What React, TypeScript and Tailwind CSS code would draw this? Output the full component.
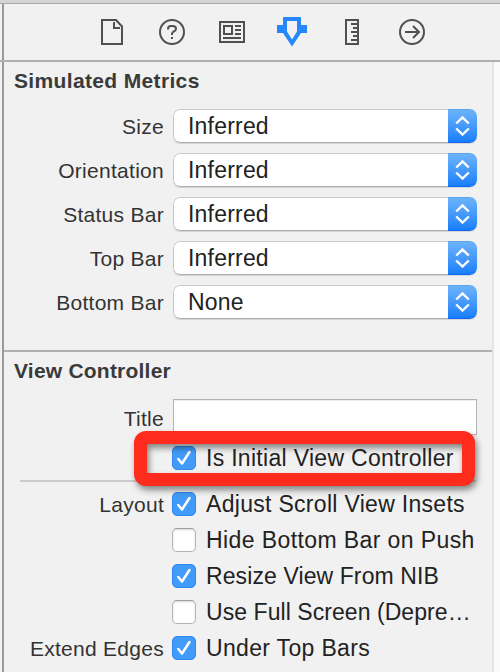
import React from "react";

function FileIcon() {
  return (
    <svg width="22" height="26" viewBox="0 0 22 26" fill="none" stroke="#505050" strokeWidth="2">
      <path d="M1 1H15L21 7.5V25H1Z" />
      <path d="M13 3V9H19" />
    </svg>
  );
}

function HelpIcon() {
  return (
    <svg width="26" height="26" viewBox="0 0 26 26" fill="none" stroke="#505050" strokeWidth="2">
      <circle cx="13" cy="13" r="12" />
      <path d="M9 10.5V9.8Q9 7 12 7H13.5Q17 7 17 9.7Q17 11.5 15 12.3Q13 13.2 13 15V16" />
      <path d="M13 18V20" />
    </svg>
  );
}

function IdentityIcon() {
  return (
    <svg width="26" height="22" viewBox="0 0 26 22" fill="none" stroke="#505050" strokeWidth="2">
      <path d="M1 1H25V21H1Z" />
      <path d="M5 5H13V13H5Z" />
      <path d="M16 5H22M16 9H22M16 13H22M4 17H22" />
    </svg>
  );
}

function AttributesIcon() {
  return (
    <svg width="30" height="30" viewBox="0 0 30 30" fill="#2487fb">
      <path fillRule="evenodd" d="M6 0H24V8H30V16H24L15 29.5L6 16H0V8H6ZM10 4V14.5L15 22.5L20 14.5V4Z" />
    </svg>
  );
}

function SizeIcon() {
  return (
    <svg width="14" height="26" viewBox="0 0 14 26" fill="none" stroke="#505050" strokeWidth="2">
      <path d="M1 1H13V25H1Z" />
      <path d="M6 5H12M8 9H12M6 13H12M8 17H12M6 21H12" />
    </svg>
  );
}

function ConnectionsIcon() {
  return (
    <svg width="26" height="26" viewBox="0 0 26 26" fill="none" stroke="#505050" strokeWidth="2">
      <circle cx="13" cy="13" r="12" />
      <path d="M6 13H20M14 7L20 13L14 19" />
    </svg>
  );
}

function Label({ children }: { children?: React.ReactNode }) {
  return (
    <div className="w-[160px] shrink-0 pt-px text-right text-[21px] leading-6 tracking-[0.28px] whitespace-nowrap text-[#333333]">
      {children}
    </div>
  );
}

function PopupRow({ label, value }: { label: string; value: string }) {
  return (
    <div className="flex h-[34px] items-center">
      <Label>{label}</Label>
      <div className="ml-[9px] flex h-[34px] w-[304px] overflow-hidden rounded-[7px] shadow-[0_1px_1px_rgba(0,0,0,0.12)]">
        <div className="flex flex-1 items-center rounded-l-[7px] border border-r-0 border-[#c9c9c9] border-b-[#acacac] bg-white pl-[14px] text-[23px] tracking-[0.2px] text-[#222222]">
          {value}
        </div>
        <div className="flex w-[29px] items-center justify-center rounded-r-[7px] border-t border-b border-t-[#5ba5ef] border-b-[#1268f5] bg-linear-to-b from-[#6bb3fa] to-[#167efc]">
          <svg width="15" height="20" viewBox="0 0 15 20" fill="none" stroke="white" strokeWidth="2.4">
            <path d="M1.2 7.5L7.5 1.5L13.8 7.5M1.2 12.5L7.5 18.5L13.8 12.5" />
          </svg>
        </div>
      </div>
    </div>
  );
}

interface CheckRowProps {
  label?: string;
  text: string;
  checked?: boolean;
  tracking: string;
}

function CheckRow({ label, text, checked, tracking }: CheckRowProps) {
  return (
    <div className="flex h-6 items-center">
      <Label>{label}</Label>
      {checked ? (
        <div className="ml-2 flex size-6 shrink-0 items-center justify-center rounded-[5px] border border-[#3588ee] bg-[#419bf9]">
          <svg width="16" height="18" viewBox="0 0 16 18" fill="none" stroke="white" strokeWidth="2.5" strokeLinecap="round" strokeLinejoin="round">
            <path d="M2.3 10L6 14.5L13.5 3" />
          </svg>
        </div>
      ) : (
        <div className="ml-2 size-6 shrink-0 rounded-[5px] border border-[#b4b4b4] border-t-[#9c9c9c] bg-white shadow-[inset_0_1px_2px_rgba(0,0,0,0.15)]" />
      )}
      <span className={`ml-[10px] text-[23px] leading-6 whitespace-nowrap text-[#222222] ${tracking}`}>{text}</span>
    </div>
  );
}

const metrics = [
  ["Size", "Inferred"],
  ["Orientation", "Inferred"],
  ["Status Bar", "Inferred"],
  ["Top Bar", "Inferred"],
  ["Bottom Bar", "None"],
];

export default function App() {
  return (
    <div className="flex h-[672px] w-[500px] flex-col overflow-hidden bg-[#f1f1f1] font-['Liberation_Sans',Arial,sans-serif]">
      <div className="h-1 shrink-0 border-b border-[#a8a8a8] bg-[#d4d4d4]" />
      <div className="flex h-[58px] shrink-0 border-b-2 border-[#b0b0b0]">
        <div className="ml-[2px] w-[2px] bg-[#999999]" />
        <div className="ml-[97px] flex items-center">
          <FileIcon />
          <div className="ml-9"><HelpIcon /></div>
          <div className="ml-[34px]"><IdentityIcon /></div>
          <div className="ml-8"><AttributesIcon /></div>
          <div className="ml-[38px]"><SizeIcon /></div>
          <div className="ml-10"><ConnectionsIcon /></div>
        </div>
      </div>
      <div className="flex min-h-0 flex-1">
        <div className="ml-[2px] w-[2px] shrink-0 bg-[#999999]" />
        <main className="w-[488px] shrink-0">
          <section className="h-[288px] pt-[7px]">
            <h2 className="pl-[10px] text-[21px] leading-6 font-bold tracking-[0.35px] text-[#3a3a3a]">Simulated Metrics</h2>
            <div className="mt-4 flex flex-col gap-[10px]">
              {metrics.map(([label, value]) => (
                <PopupRow key={label} label={label} value={value} />
              ))}
            </div>
          </section>
          <section className="border-t-2 border-[#b0b0b0] pt-[7px]">
            <h2 className="pl-[10px] text-[21px] leading-6 font-bold tracking-[0.22px] text-[#3a3a3a]">View Controller</h2>
            <div className="mt-4 flex h-9 items-center">
              <div className="pt-[2px]"><Label>Title</Label></div>
              <div className="ml-[9px] h-9 w-[304px] border border-[#b3b3b3] bg-white shadow-[inset_0_1px_1px_#eeeeee]" />
            </div>
            <div className="relative mt-[11px]">
              <CheckRow text="Is Initial View Controller" checked tracking="tracking-[0.3px]" />
              <div className="absolute top-[-15px] left-[130px] z-10 h-[55px] w-[341px] rounded-[12px] border-[13px] border-[#ff2b1c] drop-shadow-[2px_4px_3px_rgba(0,0,0,0.45)]" />
            </div>
            <div className="mt-[10px] ml-4 h-[2px] w-[456px] bg-[#cccccc]" />
            <div className="mt-[10px] flex flex-col gap-3">
              <CheckRow label="Layout" text="Adjust Scroll View Insets" checked tracking="tracking-[0.3px]" />
              <CheckRow text="Hide Bottom Bar on Push" tracking="tracking-[0.4px]" />
              <CheckRow text="Resize View From NIB" checked tracking="tracking-[0.1px]" />
              <CheckRow text="Use Full Screen (Depre…" tracking="tracking-[0.06px]" />
              <CheckRow label="Extend Edges" text="Under Top Bars" checked tracking="tracking-[0.33px]" />
            </div>
          </section>
        </main>
        <div className="flex-1 border-l-2 border-[#e5e5e5] bg-[#fafafa]" />
      </div>
    </div>
  );
}
